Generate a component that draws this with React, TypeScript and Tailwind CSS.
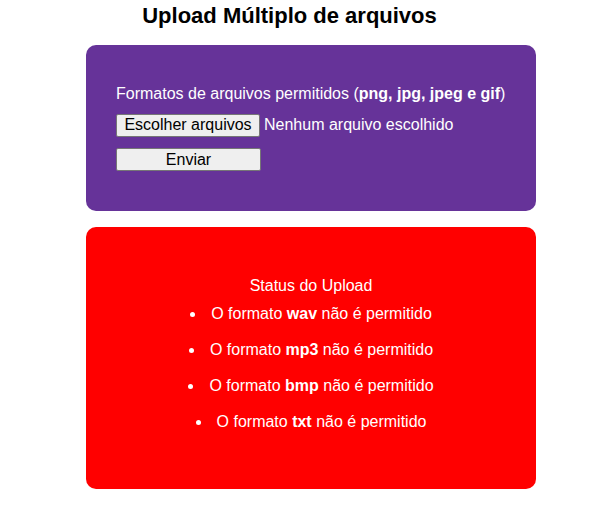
export default function App() {
  const rejected = ["wav", "mp3", "bmp", "txt"];

  return (
    <div className="w-[596px] min-h-[522px] bg-white text-black font-['Liberation_Sans',Arial,sans-serif]">
      <h3 className="w-[579px] pt-[4px] text-center text-[22px] font-bold leading-[24px]">
        Upload Múltiplo de arquivos
      </h3>

      {/* FORM */}
      <div className="ml-[86px] mt-[17px] w-[450px] rounded-[10px] bg-[#663399] px-[30px] pt-[40px] pb-[40px] text-white text-[16px]">
        <p className="leading-[18px]">
          Formatos de arquivos permitidos (<b>png, jpg, jpeg e gif</b>)
        </p>
        <div className="mt-[10px] flex items-center gap-[4px]">
          <button className="h-[23px] w-[144px] rounded-[2px] border border-[#767676] bg-[#efefef] text-black leading-none">
            Escolher arquivos
          </button>
          <span>Nenhum arquivo escolhido</span>
        </div>
        <button className="mt-[11px] block h-[23px] w-[145px] rounded-[2px] border border-[#767676] bg-[#efefef] text-black leading-none">
          Enviar
        </button>
      </div>

      {/* STATUS */}
      <div className="ml-[86px] mt-[16px] w-[450px] rounded-[10px] bg-[#ff0000] pt-[50px] pb-[58px] text-white text-[16px] text-center">
        <p className="leading-[18px]">Status do Upload</p>
        <ul className="mt-[10px] flex flex-col gap-[18px]">
          {rejected.map((ext) => (
            <li key={ext} className="flex items-center justify-center leading-[18px]">
              <span className="mr-[16px] h-[5px] w-[5px] rounded-full bg-white" />
              <span>
                O formato <b>{ext}</b> não é permitido
              </span>
            </li>
          ))}
        </ul>
      </div>
    </div>
  );
}
